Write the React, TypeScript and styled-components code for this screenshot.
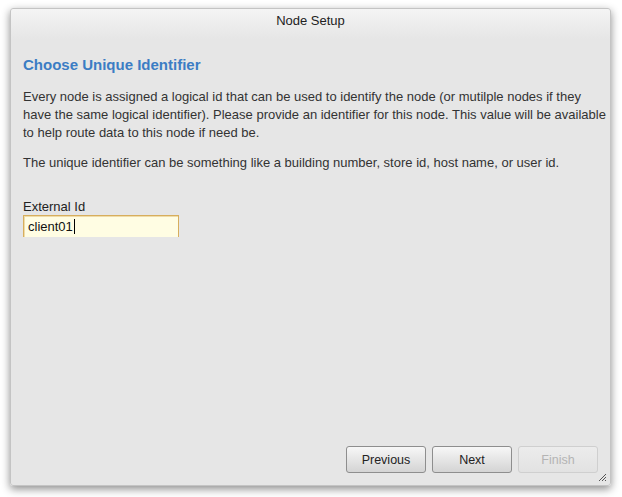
import React from "react";
import styled, { createGlobalStyle } from "styled-components";

const Global = createGlobalStyle`
  html, body { margin: 0; padding: 0; background: #ffffff; }
  body { font-family: "Liberation Sans", Arial, sans-serif; }
`;

const Page = styled.div`
  width: 622px;
  height: 497px;
  padding: 8px 11px 11px 10px;
  box-sizing: border-box;
  display: flex;
`;

const Dialog = styled.div`
  flex: 1;
  position: relative;
  display: flex;
  flex-direction: column;
  background: linear-gradient(#f4f4f4 0px, #e6e6e6 30px, #e6e6e6 100%);
  border: 1px solid #c4c4c4;
  border-radius: 3px;
  box-shadow: 0 3px 9px rgba(0, 0, 0, 0.45);
`;

const Title = styled.div`
  height: 24px;
  line-height: 24px;
  text-align: center;
  font-size: 13px;
  color: #222;
`;

const Content = styled.div`
  flex: 1;
  padding: 23px 4px 0 12px;
  display: flex;
  flex-direction: column;
`;

const Heading = styled.h2`
  margin: 0 0 14px 0;
  font-size: 15px;
  font-weight: bold;
  color: #3b7dc4;
  line-height: 18px;
`;

const Para = styled.p`
  margin: 0 0 12px 0;
  font-size: 13px;
  line-height: 18px;
  color: #333;
`;

const Field = styled.div`
  margin-top: 15px;
  display: flex;
  flex-direction: column;
`;

const Label = styled.label`
  font-size: 13px;
  line-height: 15px;
  color: #222;
`;

const Input = styled.div`
  width: 150px;
  height: 21px;
  margin-top: 1px;
  background: #fffde3;
  border: 1px solid #d7ae5d;
  border-bottom: none;
  box-shadow: inset 1px 1px 0 #f0dca8;
  padding-left: 4px;
  font-size: 13px;
  line-height: 21px;
  color: #111;
  display: flex;
  align-items: center;
`;

const Caret = styled.span`
  display: inline-block;
  width: 1px;
  height: 15px;
  background: #000;
  margin-left: 1px;
`;

const Footer = styled.div`
  display: flex;
  justify-content: flex-end;
  gap: 6px;
  padding: 0 12px 12px 0;
`;

const Button = styled.button<{ $disabled?: boolean }>`
  width: 80px;
  height: 27px;
  font-family: "Liberation Sans", Arial, sans-serif;
  font-size: 12.5px;
  color: ${(p) => (p.$disabled ? "#b4b4b4" : "#222")};
  border: 1px solid ${(p) => (p.$disabled ? "#cfcfcf" : "#8e8e8e")};
  border-radius: 3px;
  background: ${(p) =>
    p.$disabled
      ? "linear-gradient(#ececec, #e2e2e2)"
      : "linear-gradient(#f7f7f7, #d4d4d4)"};
  padding: 0;
  cursor: default;
`;

const Grip = styled.svg`
  position: absolute;
  right: 3px;
  bottom: 3px;
`;

export default function App() {
  return (
    <>
      <Global />
      <Page>
        <Dialog>
          <Title>Node Setup</Title>
          <Content>
            <Heading>Choose Unique Identifier</Heading>
            <Para>
              Every node is assigned a logical id that can be used to identify the node (or mutilple nodes if they
              have the same logical identifier). Please provide an identifier for this node. This value will be
              available to help route data to this node if need be.
            </Para>
            <Para>
              The unique identifier can be something like a building number, store id, host name, or user id.
            </Para>
            <Field>
              <Label>External Id</Label>
              <Input>
                client01
                <Caret />
              </Input>
            </Field>
          </Content>
          <Footer>
            <Button>Previous</Button>
            <Button>Next</Button>
            <Button $disabled>Finish</Button>
          </Footer>
          <Grip width="9" height="9" viewBox="0 0 9 9">
            <path d="M1 8 L8 1 M4 8 L8 4 M7 8 L8 7" stroke="#555" strokeWidth="1" />
          </Grip>
        </Dialog>
      </Page>
    </>
  );
}
